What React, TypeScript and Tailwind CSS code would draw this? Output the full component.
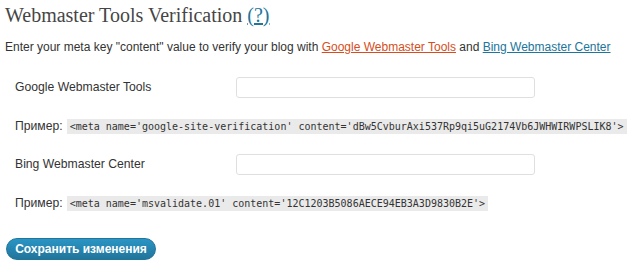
export default function App() {
  return (
    <div className="w-[634px] h-[269px] bg-white pl-[5px] font-['Liberation_Sans',Arial,sans-serif] text-[#333]">
      <h2 className="h-[30px] pt-[3px] font-['Liberation_Serif',Georgia,serif] text-[20px] leading-[24px] text-[#464646]">
        Webmaster Tools Verification{" "}
        <a href="#" className="text-[#21759b] underline">(?)</a>
      </h2>
      <p className="mt-[8px] whitespace-nowrap text-[12px] leading-[18px]">
        Enter your meta key "content" value to verify your blog with{" "}
        <a href="#" className="text-[#d54e21] underline">Google Webmaster Tools</a> and{" "}
        <a href="#" className="text-[#21759b] underline">Bing Webmaster Center</a>
      </p>

      <div className="pl-[10px] text-[12.2px]">
        <div className="mt-[21px] flex h-[21px] items-center">
          <label className="w-[221px]">Google Webmaster Tools</label>
          <input className="h-[21px] w-[299px] rounded-[3px] border border-[#dfdfdf] bg-white" />
        </div>
        <div className="mt-[21px] flex h-[15px] items-center whitespace-nowrap">
          <span className="mr-[4px]">Пример:</span>
          <code className="h-[15px] bg-[#eaeaea] px-[3px] font-['DejaVu_Sans_Mono',monospace] text-[10px] leading-[15px] text-[#333]">
            &lt;meta name='google-site-verification' content='dBw5CvburAxi537Rp9qi5uG2174Vb6JWHWIRWPSLIK8'&gt;
          </code>
        </div>
        <div className="mt-[20px] flex h-[21px] items-center">
          <label className="w-[221px]">Bing Webmaster Center</label>
          <input className="h-[21px] w-[299px] rounded-[3px] border border-[#dfdfdf] bg-white" />
        </div>
        <div className="mt-[21px] flex h-[15px] items-center whitespace-nowrap">
          <span className="mr-[4px]">Пример:</span>
          <code className="h-[15px] bg-[#eaeaea] px-[3px] font-['DejaVu_Sans_Mono',monospace] text-[10px] leading-[15px] text-[#333]">
            &lt;meta name='msvalidate.01' content='12C1203B5086AECE94EB3A3D9830B2E'&gt;
          </code>
        </div>
      </div>

      <button className="ml-[1px] mt-[27px] flex h-[22px] w-[150px] items-center justify-center whitespace-nowrap rounded-full border border-[#21759b] bg-gradient-to-b from-[#2a95c5] to-[#21759b] text-[12px] font-bold text-white">
        Сохранить изменения
      </button>
    </div>
  );
}
